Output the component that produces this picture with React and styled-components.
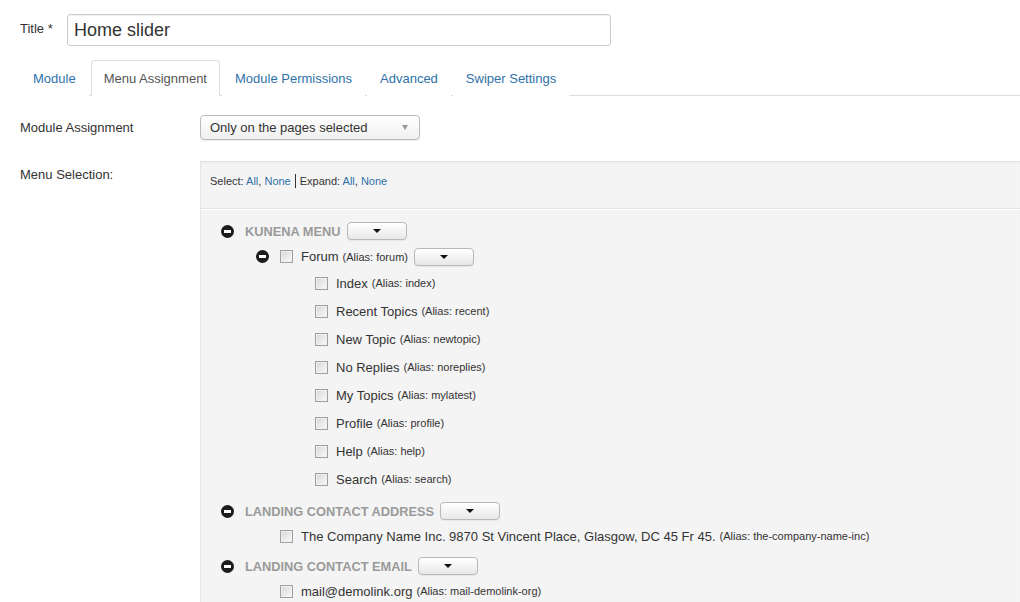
import React from 'react'
import styled, { createGlobalStyle } from 'styled-components'

const GlobalStyle = createGlobalStyle`
  html, body {
    margin: 0;
    padding: 0;
    background: #fff;
    overflow: hidden;
  }
  body {
    font-family: "Liberation Sans", Arial, sans-serif;
    font-size: 13px;
    color: #333;
  }
`

const Page = styled.div`
  width: 1000px;
  padding: 14px 0 0 20px;
`

const TitleRow = styled.div`
  display: flex;
  align-items: flex-start;
`

const TitleLabel = styled.label`
  width: 47px;
  padding-top: 7px;
  line-height: 16px;
`

const TitleInput = styled.div`
  box-sizing: border-box;
  width: 544px;
  height: 32px;
  border: 1px solid #ccc;
  border-radius: 3px;
  padding: 0 6px;
  font-size: 18px;
  line-height: 30px;
  color: #333;
  box-shadow: inset 0 1px 1px rgba(0, 0, 0, 0.06);
`

const Tabs = styled.ul`
  display: flex;
  list-style: none;
  margin: 14px 0 0;
  padding: 0;
  border-bottom: 1px solid #ddd;
`

const Tab = styled.li`
  margin-right: 2px;
  margin-bottom: -1px;
  padding: 9px 12px 7px;
  line-height: 18px;
  border: 1px solid ${p => (p.$active ? '#ddd' : 'transparent')};
  border-bottom-color: ${p => (p.$active ? '#fff' : 'transparent')};
  border-radius: 4px 4px 0 0;
  background: #fff;
  color: ${p => (p.$active ? '#555' : '#3071a9')};
`

const FieldRow = styled.div`
  display: flex;
  align-items: flex-start;
  margin-top: ${p => p.$top}px;
`

const FieldLabel = styled.div`
  width: 180px;
  flex-shrink: 0;
  padding-top: ${p => p.$pad}px;
  line-height: 16px;
`

const Select = styled.div`
  box-sizing: border-box;
  width: 220px;
  height: 25px;
  display: flex;
  align-items: center;
  justify-content: space-between;
  padding: 0 11px 0 9px;
  border: 1px solid #bbb;
  border-radius: 4px;
  background: linear-gradient(#fff, #f0f0f0);
  box-shadow: 0 1px 1px rgba(0, 0, 0, 0.08);
  color: #333;
`

const GreyCaret = styled.span`
  width: 0;
  height: 0;
  border-left: 3px solid transparent;
  border-right: 3px solid transparent;
  border-top: 5px solid #999;
`

const Panel = styled.div`
  flex: 1;
  height: 460px;
  background: #f4f4f4;
  border-top: 1px solid #e2e2e2;
  border-left: 1px solid #e6e6e6;
  box-shadow: inset 0 1px 2px rgba(0, 0, 0, 0.04);
`

const PanelHead = styled.div`
  height: 47px;
  padding: 12px 0 0 9px;
  box-sizing: border-box;
  font-size: 11px;
  line-height: 14px;
  border-bottom: 1px solid #e3e3e3;
  box-shadow: 0 1px 0 #fff;
`

const Link = styled.span`
  color: #3071a9;
`

const Pipe = styled.span`
  display: inline-block;
  width: 1px;
  height: 14px;
  margin: 0 4px;
  background: #333;
  vertical-align: -3px;
`

const Tree = styled.div`
  padding-top: 9px;
`

const Row = styled.div`
  display: flex;
  align-items: center;
  height: ${p => p.$h}px;
  margin-top: ${p => p.$mt || 0}px;
  padding-left: ${p => 20 + p.$level * 35}px;
`

const ToggleSlot = styled.span`
  width: 24px;
  flex-shrink: 0;
  display: flex;
  align-items: center;
`

const Minus = styled.span`
  position: relative;
  width: 13px;
  height: 13px;
  border-radius: 50%;
  background: #1c1c1c;
  &::after {
    content: '';
    position: absolute;
    left: 3px;
    top: 5px;
    width: 7px;
    height: 3px;
    background: #fff;
  }
`

const Check = styled.span`
  box-sizing: border-box;
  width: 13px;
  height: 13px;
  flex-shrink: 0;
  margin-right: 8px;
  border: 1px solid #a0a0a0;
  background: linear-gradient(135deg, #d6d6d6, #fbfbfb);
  box-shadow: inset 0 0 0 1px #f0f0f0;
`

const GroupTitle = styled.span`
  font-size: 12.8px;
  font-weight: bold;
  color: #9a9a9a;
  text-transform: uppercase;
`

const ItemText = styled.span`
  font-size: 13px;
  color: #333;
`

const Alias = styled.span`
  font-size: 11px;
  margin-left: 4px;
`

const MenuButton = styled.span`
  box-sizing: border-box;
  width: 60px;
  height: 18px;
  margin-left: 6px;
  display: inline-flex;
  align-items: center;
  justify-content: center;
  border: 1px solid #b8b8b8;
  border-radius: 4px;
  background: linear-gradient(#fff, #e8e8e8);
  box-shadow: 0 1px 1px rgba(0, 0, 0, 0.06);
  &::before {
    content: '';
    width: 0;
    height: 0;
    border-left: 4px solid transparent;
    border-right: 4px solid transparent;
    border-top: 4px solid #111;
  }
`

const forumItems = [
  ['Index', 'index'],
  ['Recent Topics', 'recent'],
  ['New Topic', 'newtopic'],
  ['No Replies', 'noreplies'],
  ['My Topics', 'mylatest'],
  ['Profile', 'profile'],
  ['Help', 'help'],
  ['Search', 'search'],
]

function Item({ level, h, toggle, text, alias, button }) {
  return (
    <Row $level={level} $h={h}>
      <ToggleSlot>{toggle && <Minus />}</ToggleSlot>
      <Check />
      <ItemText>{text}</ItemText>
      <Alias>(Alias: {alias})</Alias>
      {button && <MenuButton />}
    </Row>
  )
}

function Group({ title, first }) {
  return (
    <Row $level={0} $h={26} $mt={first ? 0 : 5}>
      <ToggleSlot>
        <Minus />
      </ToggleSlot>
      <GroupTitle>{title}</GroupTitle>
      <MenuButton />
    </Row>
  )
}

export default function App() {
  return (
    <Page>
      <GlobalStyle />
      <TitleRow>
        <TitleLabel>Title *</TitleLabel>
        <TitleInput>Home slider</TitleInput>
      </TitleRow>

      <Tabs>
        <Tab>Module</Tab>
        <Tab $active>Menu Assignment</Tab>
        <Tab>Module Permissions</Tab>
        <Tab>Advanced</Tab>
        <Tab>Swiper Settings</Tab>
      </Tabs>

      <FieldRow $top={19}>
        <FieldLabel $pad={5}>Module Assignment</FieldLabel>
        <Select>
          Only on the pages selected
          <GreyCaret />
        </Select>
      </FieldRow>

      <FieldRow $top={21}>
        <FieldLabel $pad={6}>Menu Selection:</FieldLabel>
        <Panel>
          <PanelHead>
            Select: <Link>All</Link>, <Link>None</Link>
            <Pipe />
            Expand: <Link>All</Link>, <Link>None</Link>
          </PanelHead>
          <Tree>
            <Group title="Kunena Menu" first />
            <Item level={1} h={25} toggle text="Forum" alias="forum" button />
            {forumItems.map(([text, alias]) => (
              <Item key={alias} level={2} h={28} text={text} alias={alias} />
            ))}
            <Group title="Landing Contact Address" />
            <Item
              level={1}
              h={24}
              text="The Company Name Inc. 9870 St Vincent Place, Glasgow, DC 45 Fr 45."
              alias="the-company-name-inc"
            />
            <Group title="Landing Contact Email" />
            <Item level={1} h={24} text="mail@demolink.org" alias="mail-demolink-org" />
          </Tree>
        </Panel>
      </FieldRow>
    </Page>
  )
}
